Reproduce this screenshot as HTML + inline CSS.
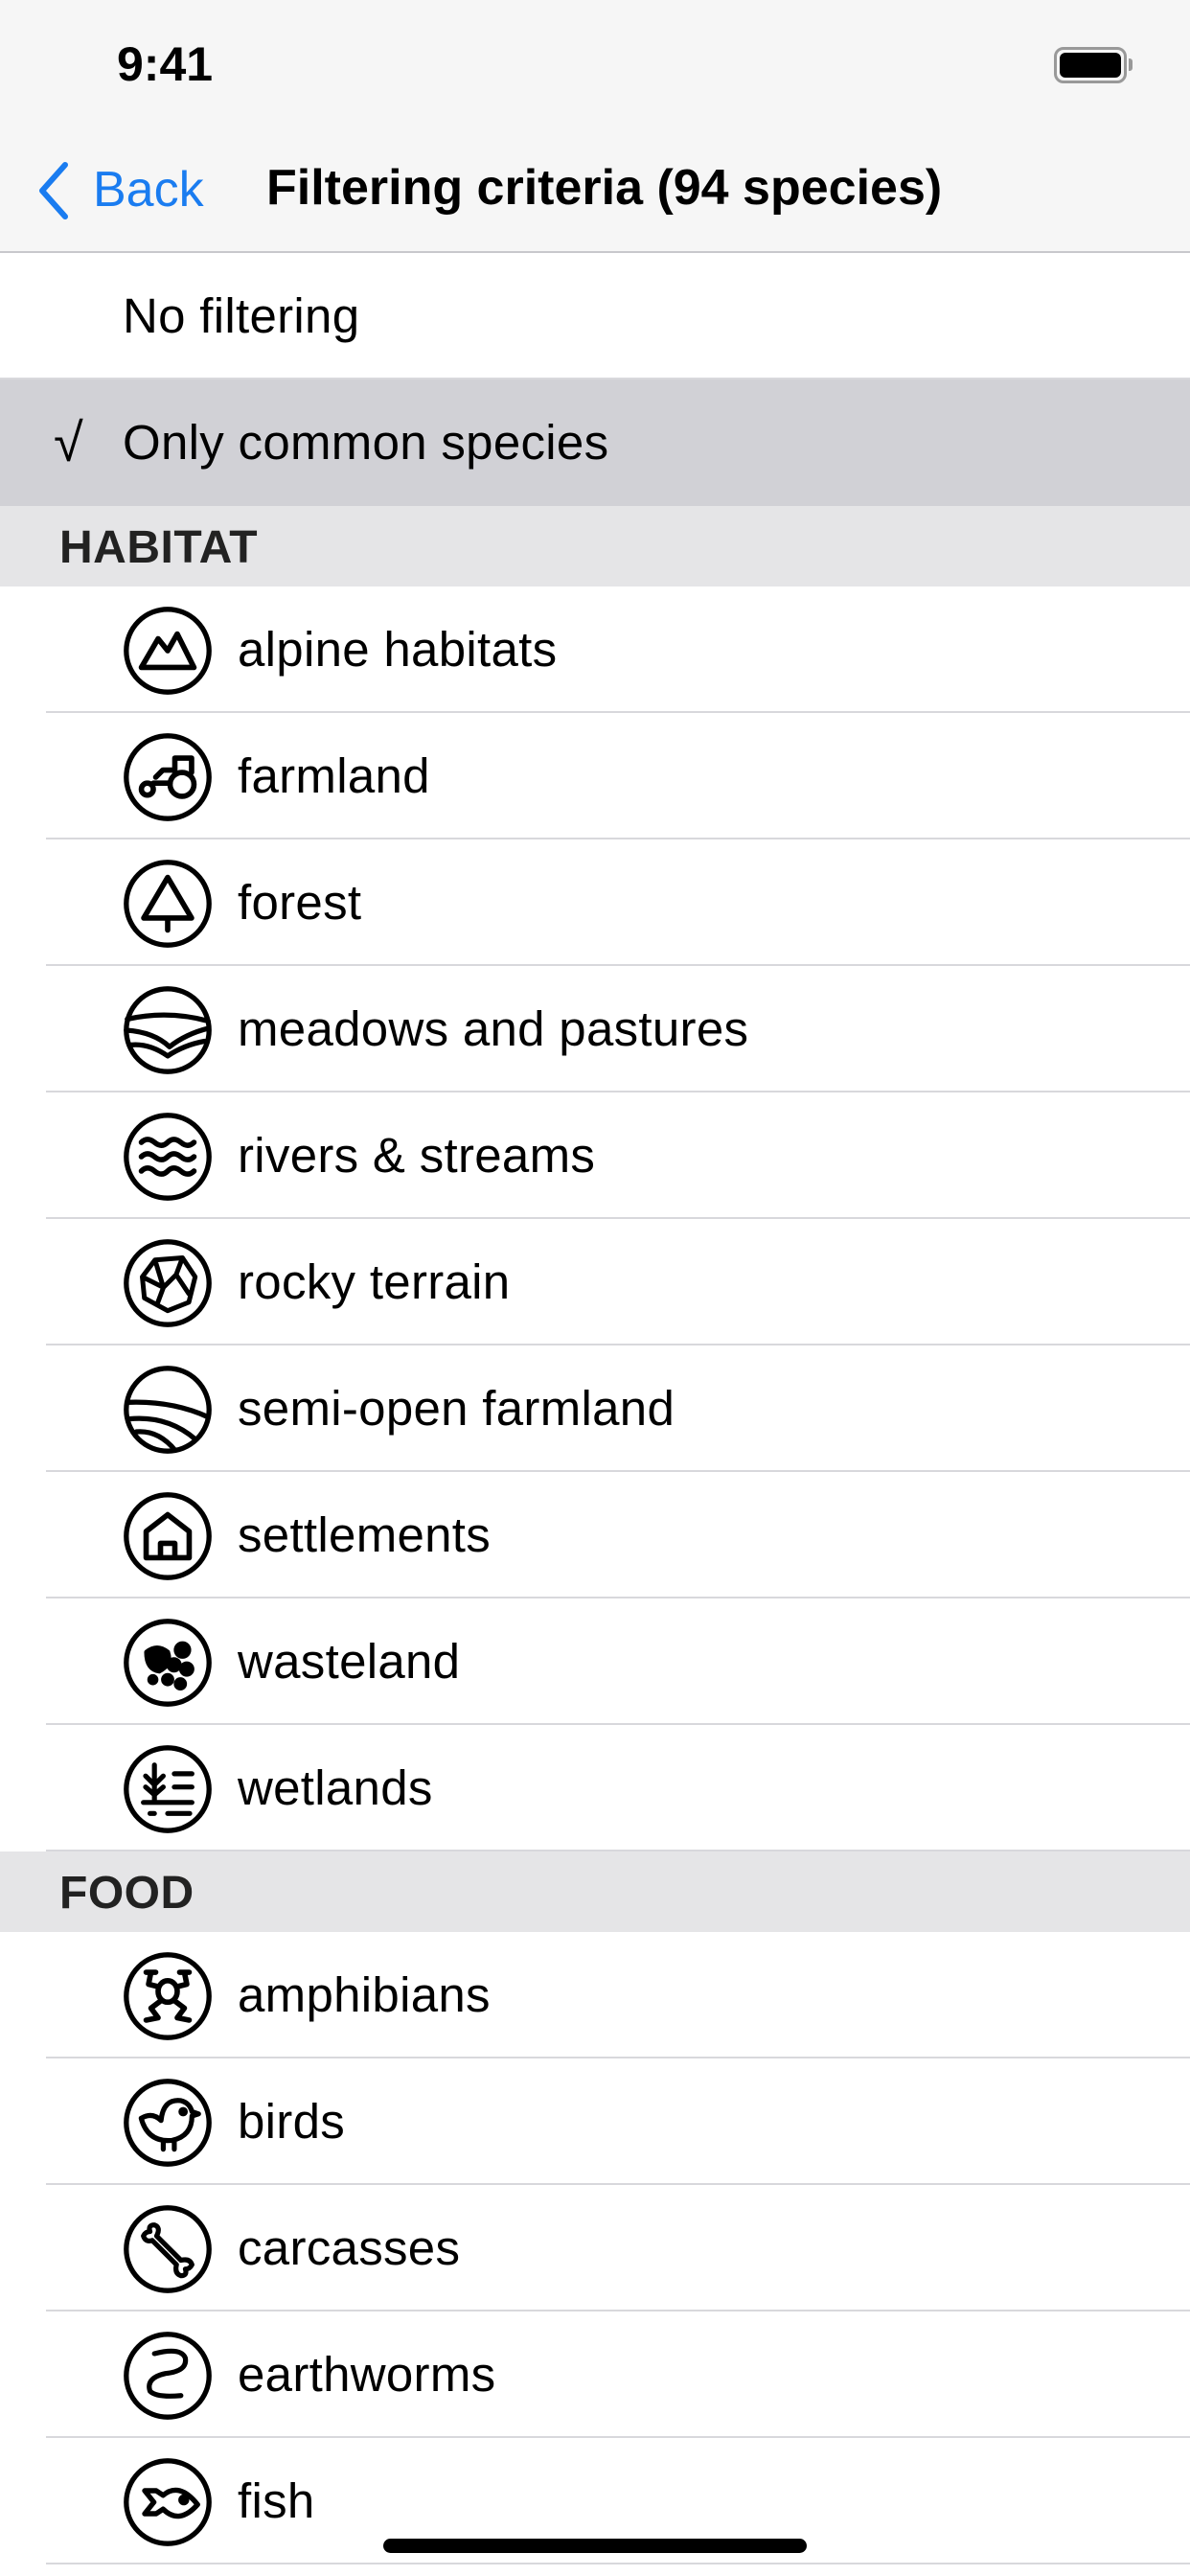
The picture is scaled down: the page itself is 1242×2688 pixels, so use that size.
<!DOCTYPE html>
<html><head><meta charset="utf-8"><style>
*{margin:0;padding:0;box-sizing:border-box}
body{width:1242px;height:2688px;background:#fff;position:relative;overflow:hidden;font-family:"Liberation Sans",sans-serif;color:#000}
.abs{position:absolute}
.row{position:absolute;left:0;width:1242px;height:132px;background:#fff}
.row .sep{position:absolute;left:48px;right:0;bottom:0;height:2px;background:#d8d8dc}
.row .t{position:absolute;left:248px;top:0;line-height:132px;font-size:51px;letter-spacing:0.3px}
.row svg{position:absolute;left:127px;top:19px;width:96px;height:96px}
.hdr{position:absolute;left:0;width:1242px;height:84px;background:#e5e5e7}
.hdr span{position:absolute;left:62px;top:0;line-height:88px;font-size:48px;font-weight:bold;color:#222;letter-spacing:0.5px}
svg *{fill:none;stroke:#000;stroke-width:5.5;stroke-linecap:round;stroke-linejoin:round}
svg g *{stroke-width:4.5}
</style></head><body>
<div class="abs" style="left:0;top:0;width:1242px;height:264px;background:#f6f6f6;border-bottom:2px solid #c8c8cc"></div>
<div class="abs" style="left:122px;top:38px;font-size:50px;font-weight:bold;letter-spacing:0px">9:41</div>
<div class="abs" style="left:1100px;top:49px;width:76px;height:38px;border:3px solid #999;border-radius:10px;padding:3px"><div style="width:100%;height:100%;background:#000;border-radius:6px"></div></div>
<div class="abs" style="left:1178px;top:61px;width:4px;height:13px;background:#999;border-radius:0 3px 3px 0"></div>
<svg class="abs" style="left:36px;top:168px;width:40px;height:62px" viewBox="0 0 40 62"><path d="M32 4 L8 31 L32 58" style="stroke:#1a7cf0;stroke-width:6;fill:none"/></svg>
<div class="abs" style="left:97px;top:168px;font-size:52px;color:#1a7cf0">Back</div>
<div class="abs" style="left:278px;top:166px;font-size:52px;font-weight:bold;letter-spacing:0px">Filtering criteria (94 species)</div>

<div class="row" style="top:264px"><div class="t" style="left:128px">No filtering</div></div>
<div class="abs" style="left:0;top:394px;width:1242px;height:2px;background:#d8d8dc"></div>
<div class="row" style="top:396px;background:#d1d1d6"><div class="t" style="left:56px;font-size:56px">√</div><div class="t" style="left:128px">Only common species</div></div>
<div class="hdr" style="top:528px"><span>HABITAT</span></div>

<div class="row" style="top:612px"><svg viewBox="0 0 100 100"><circle cx="50" cy="50" r="45"/><g transform="translate(50 50) scale(1.3) translate(-50 -50)"><path d="M28 64 L42 40 L50 50 L58 36 L72 64 Z"/></g></svg><div class="t">alpine habitats</div><div class="sep"></div></div>
<div class="row" style="top:744px"><svg viewBox="0 0 100 100"><circle cx="50" cy="50" r="45"/><g transform="translate(50 50) scale(1.3) translate(-50 -50)"><circle cx="62" cy="56" r="10"/><circle cx="33" cy="60" r="5"/><path d="M56 46 V34 H70 V46 M38 55 H52 M40 50 L46 44 H54"/></g></svg><div class="t">farmland</div><div class="sep"></div></div>
<div class="row" style="top:876px"><svg viewBox="0 0 100 100"><circle cx="50" cy="50" r="45"/><g transform="translate(50 50) scale(1.3) translate(-50 -50)"><path d="M50 28 L70 62 H30 Z M50 62 V72"/></g></svg><div class="t">forest</div><div class="sep"></div></div>
<div class="row" style="top:1008px"><svg viewBox="0 0 100 100"><circle cx="50" cy="50" r="45"/><path d="M6 38 Q50 28 94 40 M5 50 Q35 52 52 68 Q70 54 94 48 M10 66 Q30 64 50 78 Q68 66 90 62"/></svg><div class="t">meadows and pastures</div><div class="sep"></div></div>
<div class="row" style="top:1140px"><svg viewBox="0 0 100 100"><circle cx="50" cy="50" r="45"/><g transform="translate(50 50) scale(1.3) translate(-50 -50)"><path d="M28 38 Q33 33 39 38 T50 38 T61 38 T72 38 M28 50 Q33 45 39 50 T50 50 T61 50 T72 50 M28 62 Q33 57 39 62 T50 62 T61 62 T72 62"/></g></svg><div class="t">rivers &amp; streams</div><div class="sep"></div></div>
<div class="row" style="top:1272px"><svg viewBox="0 0 100 100"><circle cx="50" cy="50" r="45"/><g transform="translate(50 50) scale(1.15) translate(-50 -50)"><path d="M38 28 L64 26 L76 44 L70 68 L50 76 L28 64 L26 44 Z M26 44 L46 54 L38 28 M46 54 L40 70 M46 54 L58 42 L64 26 M58 42 L70 60"/></g></svg><div class="t">rocky terrain</div><div class="sep"></div></div>
<div class="row" style="top:1404px"><svg viewBox="0 0 100 100"><circle cx="50" cy="50" r="45"/><path d="M6 42 Q55 40 94 58 M8 60 Q50 56 80 82 M16 74 Q40 72 58 94"/></svg><div class="t">semi-open farmland</div><div class="sep"></div></div>
<div class="row" style="top:1536px"><svg viewBox="0 0 100 100"><circle cx="50" cy="50" r="45"/><g transform="translate(50 50) scale(1.3) translate(-50 -50)"><path d="M32 68 V46 L50 32 L68 46 V68 Z M44 68 V56 H56 V68"/></g></svg><div class="t">settlements</div><div class="sep"></div></div>
<div class="row" style="top:1668px"><svg viewBox="0 0 100 100"><circle cx="50" cy="50" r="45"/><g transform="translate(50 50) scale(1.15) translate(-50 -50)"><path d="M30 40 Q40 32 50 40 Q54 52 42 58 Q30 56 30 40 Z" style="fill:#000"/><circle cx="64" cy="38" r="6" style="fill:#000"/><circle cx="56" cy="52" r="5" style="fill:#000"/><circle cx="68" cy="56" r="5" style="fill:#000"/><circle cx="50" cy="66" r="4" style="fill:#000"/><circle cx="62" cy="70" r="4" style="fill:#000"/><circle cx="36" cy="66" r="3" style="fill:#000"/></g></svg><div class="t">wasteland</div><div class="sep"></div></div>
<div class="row" style="top:1800px"><svg viewBox="0 0 100 100"><circle cx="50" cy="50" r="45"/><g transform="translate(50 50) scale(1.2) translate(-50 -50)"><path d="M38 28 V60 M30 38 L38 46 L46 38 M30 48 L38 55 L46 48 M56 36 H72 M56 48 H72 M28 62 H72 M34 72 H38 M50 72 H70"/></g></svg><div class="t">wetlands</div><div class="sep"></div></div>

<div class="hdr" style="top:1932px"><span>FOOD</span></div>

<div class="row" style="top:2016px"><svg viewBox="0 0 100 100"><circle cx="50" cy="50" r="45"/><g transform="translate(50 50) scale(1.3) translate(-50 -50)"><ellipse cx="50" cy="46" rx="8" ry="9"/><path d="M42 42 L34 40 L36 30 M58 42 L66 40 L64 30 M44 54 L36 60 L42 68 L32 70 M56 54 L64 60 L58 68 L68 70 M32 30 H40 M60 30 H68"/></g></svg><div class="t">amphibians</div><div class="sep"></div></div>
<div class="row" style="top:2148px"><svg viewBox="0 0 100 100"><circle cx="50" cy="50" r="45"/><g transform="translate(50 50) scale(1.2) translate(-50 -50)"><path d="M26 46 Q36 40 44 48 Q46 28 62 30 Q70 32 72 40 L78 42 L72 44 Q72 62 54 66 Q32 68 26 46 Z M46 66 V74 M56 66 V74"/><circle cx="64" cy="40" r="2" style="fill:#000"/></g></svg><div class="t">birds</div><div class="sep"></div></div>
<div class="row" style="top:2280px"><svg viewBox="0 0 100 100"><circle cx="50" cy="50" r="45"/><g transform="translate(50 50) scale(1.2) translate(-50 -50)"><path d="M40 38 L62 60 Q70 58 72 64 Q70 68 66 68 Q68 74 62 74 Q56 72 58 64 L36 42 Q30 44 28 38 Q30 34 34 34 Q32 28 38 28 Q44 30 40 38 Z"/></g></svg><div class="t">carcasses</div><div class="sep"></div></div>
<div class="row" style="top:2412px"><svg viewBox="0 0 100 100"><circle cx="50" cy="50" r="45"/><g transform="translate(50 50) scale(1.2) translate(-50 -50)"><path d="M38 30 Q62 24 66 34 Q68 46 48 48 Q30 52 34 64 Q40 70 62 68"/></g></svg><div class="t">earthworms</div><div class="sep"></div></div>
<div class="row" style="top:2544px"><svg viewBox="0 0 100 100"><circle cx="50" cy="50" r="45"/><g transform="translate(50 50) scale(1.25) translate(-50 -50)"><path d="M30 40 L38 50 L30 60 L40 60 L46 56 Q60 70 76 52 Q60 32 46 44 L40 40 Z"/><circle cx="64" cy="48" r="2.5" style="fill:#000"/></g></svg><div class="t">fish</div><div class="sep"></div></div>

<div class="abs" style="left:400px;top:2649px;width:442px;height:15px;background:#000;border-radius:8px"></div>
</body></html>
